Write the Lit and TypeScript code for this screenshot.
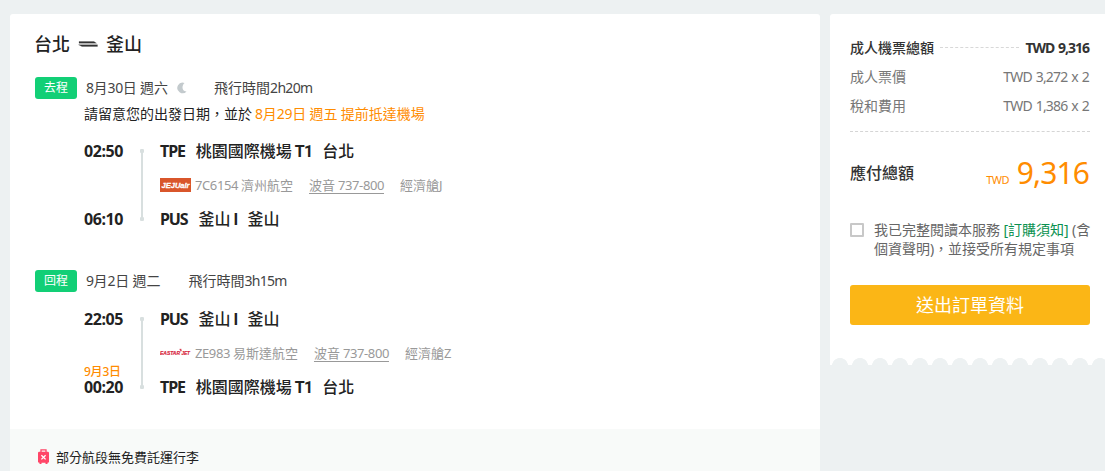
import { LitElement, html, svg, css, nothing } from "lit";
import { customElement, property, state } from "lit/decorators.js";

interface Airport {
  time: string;
  dayNote?: string;
  code: string;
  name: string;
  terminal: string;
  city: string;
}

interface Leg {
  label: string;
  date: string;
  overnight?: boolean;
  duration: string;
  notice?: { text: string; highlight: string };
  from: Airport;
  to: Airport;
  logo: "jeju" | "eastar";
  flight: string;
  plane: string;
  cabin: string;
}

const LEGS: Leg[] = [
  {
    label: "去程",
    date: "8月30日 週六",
    overnight: true,
    duration: "飛行時間2h20m",
    notice: {
      text: "請留意您的出發日期，並於",
      highlight: "8月29日 週五 提前抵達機場",
    },
    from: { time: "02:50", code: "TPE", name: "桃園國際機場", terminal: "T1", city: "台北" },
    to: { time: "06:10", code: "PUS", name: "釜山", terminal: "I", city: "釜山" },
    logo: "jeju",
    flight: "7C6154 濟州航空",
    plane: "波音 737-800",
    cabin: "經濟艙J",
  },
  {
    label: "回程",
    date: "9月2日 週二",
    duration: "飛行時間3h15m",
    from: { time: "22:05", code: "PUS", name: "釜山", terminal: "I", city: "釜山" },
    to: {
      time: "00:20",
      dayNote: "9月3日",
      code: "TPE",
      name: "桃園國際機場",
      terminal: "T1",
      city: "台北",
    },
    logo: "eastar",
    flight: "ZE983 易斯達航空",
    plane: "波音 737-800",
    cabin: "經濟艙Z",
  },
];

// Latin runs are set tighter than the Chinese text around them
const mixed = (text: string) =>
  text
    .split(/([\x20-\x7e]+)/)
    .filter(Boolean)
    .map((run) => (/^[\x20-\x7e]/.test(run) ? html`<span class="latin">${run}</span>` : run));

const base = css`
  * {
    box-sizing: border-box;
  }
  .latin {
    letter-spacing: var(--tight, -0.4px);
    white-space: pre;
  }
`;

@customElement("airline-logo")
export class AirlineLogo extends LitElement {
  @property({ type: String }) name = "jeju";

  render() {
    return html`
      <svg width="31" height="14" viewBox="0 0 31 14">
        ${this.name === "jeju"
          ? svg`
              <rect width="31" height="14" fill="#d9562b" />
              <text x="1.5" y="10" class="jeju" textLength="28" lengthAdjust="spacingAndGlyphs">JEJUair</text>
            `
          : svg`
              <text x="0" y="9" class="eastar" textLength="20" lengthAdjust="spacingAndGlyphs">EASTAR</text>
              <path d="M19.6 3.4l1.8 .9M20.8 2.8l.1 2.6" stroke="#d7263d" stroke-width="1" />
              <text x="21.4" y="9" class="eastar" textLength="8.6" lengthAdjust="spacingAndGlyphs">JET</text>
            `}
      </svg>
    `;
  }

  static styles = css`
    :host {
      display: block;
      width: 31px;
      height: 14px;
    }
    svg {
      display: block;
    }
    text {
      font-family: "Liberation Sans", sans-serif;
      font-weight: bold;
      font-style: italic;
    }
    .jeju {
      font-size: 8px;
      fill: #fff;
      stroke: #fff;
      stroke-width: 0.3px;
    }
    .eastar {
      font-size: 5.6px;
      fill: #d7263d;
      stroke: #d7263d;
      stroke-width: 0.2px;
    }
  `;
}

@customElement("flight-leg")
export class FlightLeg extends LitElement {
  @property({ attribute: false }) leg!: Leg;

  renderTime(airport: Airport) {
    return html`
      <div class="time">
        ${airport.dayNote ? html`<span class="day-note">${mixed(airport.dayNote)}</span>` : nothing}
        ${airport.time}
      </div>
    `;
  }

  renderAirport(airport: Airport) {
    return html`
      <div class="airport">
        <b class="code">${airport.code}</b>
        <span>${airport.name}</span>
        <b class="terminal">${airport.terminal}</b>
        <span class="city">${airport.city}</span>
      </div>
    `;
  }

  render() {
    const { leg } = this;
    return html`
      <div class="head">
        <span class="badge">${leg.label}</span>
        <span class="date">${mixed(leg.date)}</span>
        ${leg.overnight
          ? html`
              <svg class="moon" width="10" height="12" viewBox="0 0 10 12">
                <path d="M7.6 .9A5.3 5.3 0 1 0 9.6 9.4C6.9 9.6 5.5 7.8 5.5 5.6C5.5 3.5 6.3 1.8 7.6 .9Z" fill="#c3cacd" />
              </svg>
            `
          : nothing}
        <span class="duration">${mixed(leg.duration)}</span>
      </div>
      ${leg.notice
        ? html`
            <div class="notice">
              <span>${leg.notice.text}</span>
              <span class="highlight">${mixed(leg.notice.highlight)}</span>
            </div>
          `
        : nothing}
      <div class="segment">
        <div class="times">${this.renderTime(leg.from)} ${this.renderTime(leg.to)}</div>
        <div class="track"></div>
        <div class="stops">
          ${this.renderAirport(leg.from)}
          <div class="flight">
            <airline-logo name=${leg.logo}></airline-logo>
            <span class="number">${mixed(leg.flight)}</span>
            <span class="plane">${mixed(leg.plane)}</span>
            <span class="cabin">${mixed(leg.cabin)}</span>
          </div>
          ${this.renderAirport(leg.to)}
        </div>
      </div>
    `;
  }

  static styles = [
    base,
    css`
      :host {
        display: block;
        white-space: nowrap;
      }
      .head {
        display: flex;
        align-items: center;
        height: 28px;
        font-size: 14px;
        color: #444;
      }
      .badge {
        width: 42px;
        height: 22px;
        border-radius: 3px;
        background: #12cf76;
        color: #fff;
        font-size: 12px;
        line-height: 22px;
        text-align: center;
      }
      .date {
        margin-left: 9px;
        padding-bottom: 2px;
      }
      .moon {
        margin-left: 9px;
        margin-right: -1px;
      }
      .duration {
        margin-left: 28px;
        padding-bottom: 2px;
        --tight: -0.7px;
      }
      .notice {
        display: flex;
        align-items: center;
        gap: 3px;
        height: 25px;
        padding: 0 0 4px 49px;
        font-size: 14px;
      }
      .highlight {
        color: #ff8c00;
        --tight: -0.3px;
      }
      .segment {
        display: grid;
        grid-template-columns: 56px 4px auto;
        height: 102px;
        margin-top: 7px;
        padding-left: 49px;
      }
      .times {
        display: flex;
        flex-direction: column;
        justify-content: space-between;
      }
      .time {
        position: relative;
        height: 34px;
        font-size: 16px;
        font-weight: bold;
        line-height: 34px;
        letter-spacing: -0.4px;
      }
      .day-note {
        position: absolute;
        left: 0;
        top: -7px;
        color: #ff8c00;
        font-size: 12px;
        line-height: 18px;
        font-weight: 500;
        letter-spacing: 0;
      }
      .track {
        margin: 15px 0;
        background:
          radial-gradient(circle at 2px 2px, #d8dfdf 2px, transparent 2.4px) top / 4px 4px no-repeat,
          radial-gradient(circle at 2px 2px, #d8dfdf 2px, transparent 2.4px) bottom / 4px 4px no-repeat,
          linear-gradient(#d8dfdf, #d8dfdf) center / 2px 100% no-repeat;
      }
      .stops {
        padding-left: 16px;
      }
      .airport {
        display: flex;
        align-items: center;
        height: 34px;
        font-size: 16px;
      }
      .airport span {
        padding-bottom: 2px;
        font-weight: 500;
      }
      .code {
        margin-right: 11px;
        letter-spacing: -1.1px;
      }
      .terminal {
        margin-left: 3px;
        font-family: Roboto, sans-serif;
        letter-spacing: -0.8px;
      }
      .city {
        margin-left: 10px;
      }
      .flight {
        display: flex;
        align-items: center;
        height: 34px;
        font-size: 13px;
        color: #999;
      }
      .flight span {
        padding-bottom: 1px;
      }
      .number {
        margin-left: 4px;
      }
      .plane {
        margin: 0 16px;
        text-decoration: underline;
        text-underline-offset: 3px;
      }
    `,
  ];
}

@customElement("fare-summary")
export class FareSummary extends LitElement {
  @state() agreed = false;

  toggle() {
    this.agreed = !this.agreed;
  }

  render() {
    return html`
      <div class="body">
        <div class="row total">
          <span>成人機票總額</span>
          <i class="leader"></i>
          <span class="latin">TWD 9,316</span>
        </div>
        <div class="row">
          <span>成人票價</span>
          <span class="latin">TWD 3,272 x 2</span>
        </div>
        <div class="row">
          <span>稅和費用</span>
          <span class="latin">TWD 1,386 x 2</span>
        </div>
        <div class="payable">
          <span class="payable-label">應付總額</span>
          <span class="amount"><small>TWD</small><span class="sum">9,316</span></span>
        </div>
        <label class="agree">
          <span class="box" @click=${this.toggle}>${this.agreed ? "✓" : nothing}</span>
          <span class="terms">
            我已完整閱讀本服務${mixed(" ")}<a>${mixed("[訂購須知]")}</a>${mixed(" (含")}<br />
            ${mixed("個資聲明)，並接受所有規定事項")}
          </span>
        </label>
        <button>送出訂單資料</button>
      </div>
      <div class="scallops"></div>
    `;
  }

  static styles = [
    base,
    css`
      :host {
        display: block;
        flex: none;
        width: 280px;
        white-space: nowrap;
      }
      .body {
        height: 344px;
        padding: 20px 20px 0;
        border-radius: 3px 3px 0 0;
        background: #fff;
      }
      .row {
        display: flex;
        align-items: center;
        justify-content: space-between;
        height: 29px;
        font-size: 14px;
        color: #777;
      }
      .row span {
        padding-bottom: 3px;
      }
      .row .latin {
        padding-right: 1px;
        word-spacing: 1px;
        --tight: -0.8px;
      }
      .total {
        color: #333;
        font-weight: 500;
      }
      .total .latin {
        font-weight: bold;
        --tight: -1px;
      }
      .leader {
        flex: 1;
        margin: 0 6px 2px;
        border-top: 1px dashed #d8d8d8;
      }
      .payable {
        display: flex;
        align-items: center;
        justify-content: space-between;
        height: 84px;
        margin-top: 10px;
        padding-bottom: 3px;
        border-top: 1px dashed #d5d5d5;
      }
      .payable-label {
        color: #333;
        font-size: 16px;
        font-weight: 500;
      }
      .amount {
        display: flex;
        align-items: baseline;
        gap: 8px;
        padding-right: 1px;
        color: #ff8c00;
      }
      small {
        font-size: 11px;
        letter-spacing: -0.6px;
      }
      .sum {
        font-size: 30px;
        letter-spacing: -0.9px;
      }
      .agree {
        display: flex;
        gap: 10px;
        margin-top: 5px;
        font-size: 14px;
        line-height: 19px;
        color: #666;
        --tight: -0.1px;
      }
      .box {
        flex: none;
        width: 14px;
        height: 14px;
        margin-top: 3px;
        border: 2px solid #c8c8c8;
        border-radius: 1px;
        font-size: 10px;
        line-height: 10px;
      }
      a {
        color: #0a9150;
      }
      button {
        display: block;
        width: 100%;
        height: 40px;
        margin-top: 27px;
        padding: 0 0 3px;
        border: 0;
        border-radius: 3px;
        background: #fbb616;
        color: #fff;
        font-family: inherit;
        font-size: 18px;
        cursor: pointer;
      }
      .scallops {
        height: 7px;
        background: radial-gradient(circle at 10px 8px, transparent 7.7px, #fff 8.3px) 0 0 / 20px 7px;
      }
    `,
  ];
}

@customElement("app-root")
export class AppRoot extends LitElement {
  render() {
    return html`
      <main class="itinerary">
        <h1>
          <span>台北</span>
          <svg width="20" height="8" viewBox="0 0 20 8">
            <path d="M1 1.5H16L18.5 3.2H1ZM19.5 6.5H4L.5 4.7H19.5Z" fill="#333" stroke="#333" stroke-width=".2" />
          </svg>
          <span>釜山</span>
        </h1>
        <div class="legs">${LEGS.map((leg) => html`<flight-leg .leg=${leg}></flight-leg>`)}</div>
        <footer>
          <svg width="11" height="15" viewBox="0 0 11 15">
            <path d="M3 3V.8H8V3" fill="none" stroke="#ff4668" stroke-width="1.3" />
            <rect x="0" y="2.8" width="11" height="11" rx="1.3" fill="#ff4668" />
            <path d="M1.5 13H3.5V15H1.5ZM7.5 13H9.5V15H7.5Z" fill="#ff4668" />
            <path d="M3.4 6.2L7.6 10.4M7.6 6.2L3.4 10.4" stroke="#fff" stroke-width="1.3" />
          </svg>
          <span>部分航段無免費託運行李</span>
        </footer>
      </main>
      <fare-summary></fare-summary>
    `;
  }

  static styles = [
    base,
    css`
      :host {
        box-sizing: border-box;
        display: flex;
        align-items: flex-start;
        gap: 10px;
        height: 471px;
        padding: 14px 0 0 10px;
        overflow: hidden;
        background: #edf1f2;
        color: #222;
        font-family: "Noto Sans", "Noto Sans CJK TC", sans-serif;
      }
      .itinerary {
        flex: none;
        width: 810px;
        border-radius: 3px;
        background: #fff;
      }
      h1 {
        display: flex;
        align-items: center;
        gap: 8px;
        height: 60px;
        margin: 0;
        padding: 0 0 1px 24px;
        font-size: 18px;
        font-weight: 500;
      }
      h1 span {
        padding-bottom: 1px;
      }
      .legs {
        display: flex;
        flex-direction: column;
        gap: 31px;
        padding: 0 25px 25px;
      }
      footer {
        display: flex;
        align-items: center;
        gap: 7px;
        height: 56px;
        padding: 0 0 2px 28px;
        background: #f8faf9;
        font-size: 13px;
      }
    `,
  ];
}

declare global {
  interface HTMLElementTagNameMap {
    "airline-logo": AirlineLogo;
    "flight-leg": FlightLeg;
    "fare-summary": FareSummary;
    "app-root": AppRoot;
  }
}
